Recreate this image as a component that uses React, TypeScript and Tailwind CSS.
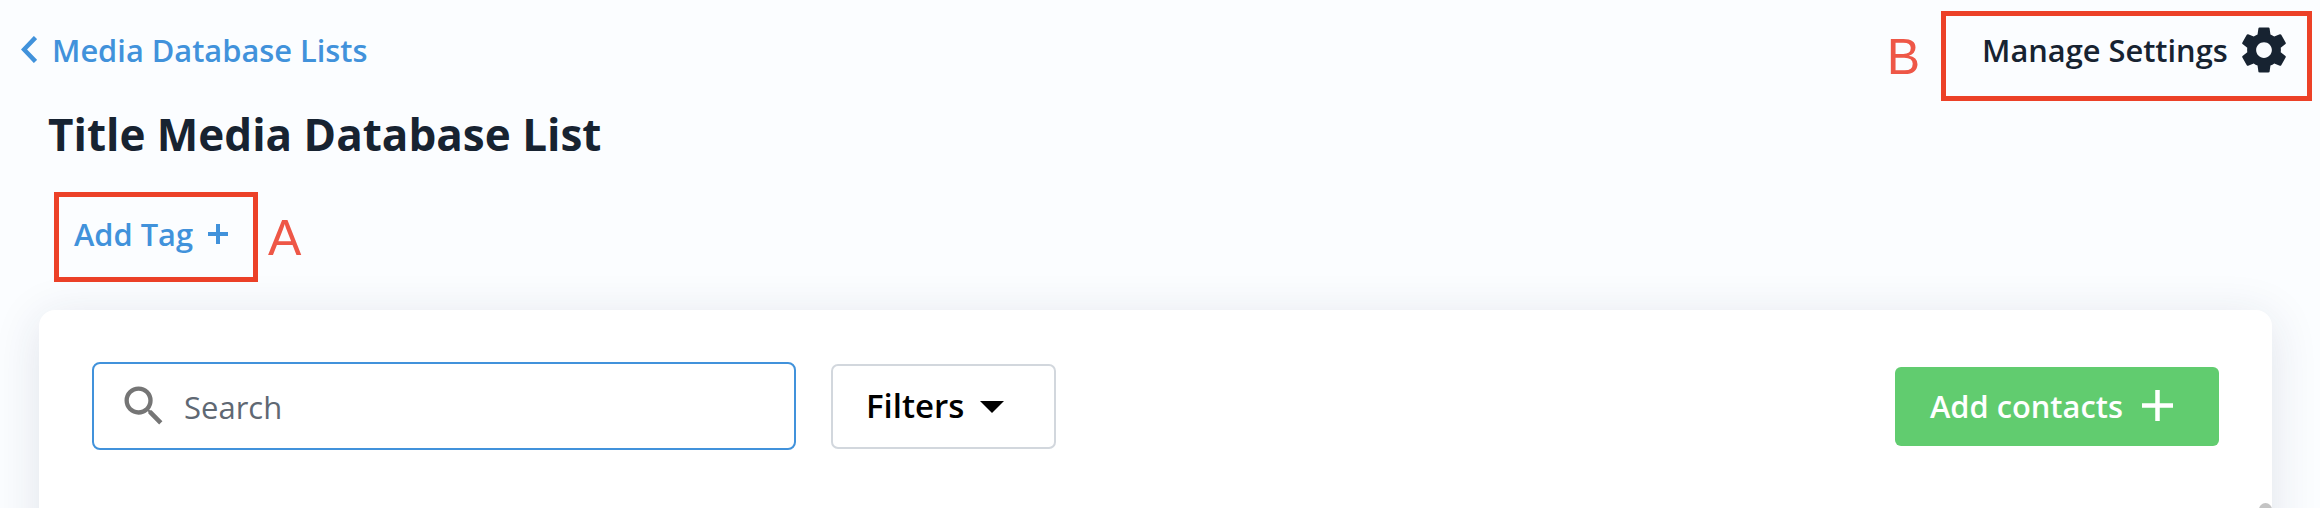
import type { ReactNode } from "react";
import { MdSearch } from "react-icons/md";

function GearIcon() {
  return (
    <svg viewBox="0 0 24 24" className="size-[54px] shrink-0" fill="currentColor">
      <path d="M19.43 12.98c.04-.32.07-.64.07-.98s-.03-.66-.07-.98l2.11-1.65c.19-.15.24-.42.12-.64l-2-3.46c-.12-.22-.39-.3-.61-.22l-2.49 1c-.52-.4-1.08-.73-1.69-.98l-.38-2.65C14.46 2.18 14.25 2 14 2h-4c-.25 0-.46.18-.49.42l-.38 2.65c-.61.25-1.17.59-1.69.98l-2.49-1c-.23-.09-.49 0-.61.22l-2 3.46c-.13.22-.07.49.12.64l2.11 1.65c-.04.32-.07.65-.07.98s.03.66.07.98l-2.11 1.65c-.19.15-.24.42-.12.64l2 3.46c.12.22.39.3.61.22l2.49-1c.52.4 1.08.73 1.69.98l.38 2.65c.03.24.24.42.49.42h4c.25 0 .46-.18.49-.42l.38-2.65c.61-.25 1.17-.59 1.69-.98l2.49 1c.23.09.49 0 .61-.22l2-3.46c.12-.22.07-.49-.12-.64l-2.11-1.65zM12 15.5c-1.93 0-3.5-1.57-3.5-3.5s1.57-3.5 3.5-3.5 3.5 1.57 3.5 3.5-1.57 3.5-3.5 3.5z" />
    </svg>
  );
}

function Marker({ children }: { children: ReactNode }) {
  return (
    <span className="font-['Liberation_Sans',sans-serif] text-[50px] leading-[50px] text-[#ee5747]">
      {children}
    </span>
  );
}

export default function App() {
  return (
    <div className="flex h-[508px] w-[2320px] flex-col overflow-hidden bg-[#fbfdff] font-['Open_Sans',sans-serif] text-[#172331]">
      <header className="flex h-[101px] items-start justify-between pt-[11px] pr-2 pl-[21px]">
        <a href="#" className="mt-[18px] flex items-center text-[#4192db]">
          <svg viewBox="0 0 16 27" className="-mt-px h-[27px] w-4" fill="none" stroke="currentColor" strokeWidth="4.5">
            <path d="M14.5 1.5L3 13.5l11.5 12" />
          </svg>
          <span className="ml-[15px] text-[30.8px] leading-[42px] font-semibold">Media Database Lists</span>
        </a>
        <div className="flex">
          <div className="mt-[21px] mr-[21px]">
            <Marker>B</Marker>
          </div>
          <button className="flex h-[90px] w-[371px] items-start border-[5px] border-[#ec4128] pt-[7px] pl-[36px]">
            <span className="mt-[6px] w-[246px] text-left text-[30.8px] leading-[42px] font-semibold whitespace-nowrap">
              Manage Settings
            </span>
            <span className="ml-[9px]">
              <GearIcon />
            </span>
          </button>
        </div>
      </header>

      <h1 className="mt-[3px] ml-[48px] text-[44px] leading-[60px] font-bold">Title Media Database List</h1>

      <div className="mt-[28px] ml-[54px] flex items-start">
        <button className="flex h-[90px] w-[204px] items-start border-[5px] border-[#ec4128] pt-[16px] pl-[15px] text-[#4192db]">
          <span className="w-[120px] text-left text-[30.8px] leading-[42px] font-semibold whitespace-nowrap">Add Tag</span>
          <svg viewBox="0 0 20 20" className="mt-[11px] ml-[14px] size-5" stroke="currentColor" strokeWidth="4">
            <path d="M10 0v20M0 10h20" />
          </svg>
        </button>
        <div className="mt-[21px] ml-[10px]">
          <Marker>A</Marker>
        </div>
      </div>

      <main className="mt-[28px] ml-[39px] flex h-[260px] w-[2233px] shrink-0 items-start rounded-[16px] bg-white pl-[53px] shadow-[0_8px_48px_rgba(30,45,80,0.12)]">
        <label className="mt-[52px] flex h-[88px] w-[704px] items-center rounded-[8px] border-2 border-[#4192db] pl-[24px]">
          <MdSearch className="size-[52px] text-[#757575]" />
          <input
            type="text"
            placeholder="Search"
            className="mt-[2px] ml-[14px] w-[560px] text-[31px] leading-[42px] outline-none placeholder:text-[#5f6873]"
          />
        </label>
        <button className="mt-[54px] ml-[35px] flex h-[85px] w-[225px] items-center rounded-[7px] border-2 border-[#d2d7dd] pl-[33px] text-black">
          <span className="-mt-[2px] w-[97px] text-left text-[33px] leading-[44px] font-semibold">Filters</span>
          <svg viewBox="0 0 24 12" className="ml-[17px] h-3 w-6" fill="currentColor">
            <path d="M0 0h24L12 12z" />
          </svg>
        </button>
        <button className="mt-[57px] mr-[53px] ml-auto flex h-[79px] w-[324px] items-center rounded-[6px] bg-[#61cc6f] pl-[35px] text-white">
          <span className="-mt-[2px] w-[194px] text-left text-[30.8px] leading-[42px] font-semibold whitespace-nowrap">
            Add contacts
          </span>
          <svg viewBox="0 0 31 31" className="-mt-[2px] ml-[18px] size-[31px]" stroke="currentColor" strokeWidth="4.5">
            <path d="M15.5 0v31M0 15.5h31" />
          </svg>
        </button>
      </main>
      {/* top of the list's scrollbar thumb */}
      <div className="absolute top-[503px] left-[2259px] h-[5px] w-[13px] overflow-hidden">
        <div className="h-10 rounded-full bg-[#c4c4c4]" />
      </div>
    </div>
  );
}
